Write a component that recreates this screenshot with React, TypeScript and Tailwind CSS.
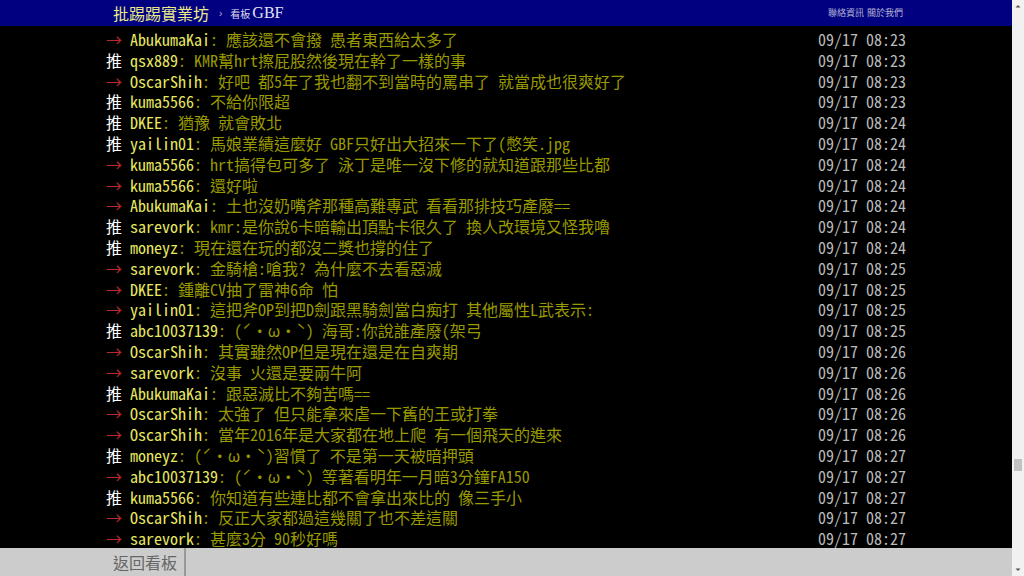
const pushes: [string, string, string, string][] = [
  ["→", "AbukumaKai", "應該還不會撥 愚者東西給太多了", "09/17 08:23"],
  ["推", "qsx889", "KMR幫hrt擦屁股然後現在幹了一樣的事", "09/17 08:23"],
  ["→", "OscarShih", "好吧 都5年了我也翻不到當時的罵串了 就當成也很爽好了", "09/17 08:23"],
  ["推", "kuma5566", "不給你限超", "09/17 08:23"],
  ["推", "DKEE", "猶豫 就會敗北", "09/17 08:24"],
  ["推", "yailin01", "馬娘業績這麼好 GBF只好出大招來一下了(憋笑.jpg", "09/17 08:24"],
  ["→", "kuma5566", "hrt搞得包可多了 泳丁是唯一沒下修的就知道跟那些比都", "09/17 08:24"],
  ["→", "kuma5566", "還好啦", "09/17 08:24"],
  ["→", "AbukumaKai", "土也沒奶嘴斧那種高難專武 看看那排技巧產廢==", "09/17 08:24"],
  ["推", "sarevork", "kmr:是你說6卡暗輸出頂點卡很久了 換人改環境又怪我嚕", "09/17 08:24"],
  ["推", "moneyz", "現在還在玩的都沒二獎也撐的住了", "09/17 08:24"],
  ["→", "sarevork", "金騎槍:嗆我? 為什麼不去看惡滅", "09/17 08:25"],
  ["→", "DKEE", "鍾離CV抽了雷神6命 怕", "09/17 08:25"],
  ["→", "yailin01", "這把斧OP到把D劍跟黑騎劍當白痴打 其他屬性L武表示:", "09/17 08:25"],
  ["推", "abc10037139", "(ˊ・ω・ˋ) 海哥:你說誰產廢(架弓", "09/17 08:25"],
  ["→", "OscarShih", "其實雖然OP但是現在還是在自爽期", "09/17 08:26"],
  ["→", "sarevork", "沒事 火還是要兩牛阿", "09/17 08:26"],
  ["推", "AbukumaKai", "跟惡滅比不夠苦嗎==", "09/17 08:26"],
  ["→", "OscarShih", "太強了 但只能拿來虐一下舊的王或打拳", "09/17 08:26"],
  ["→", "OscarShih", "當年2016年是大家都在地上爬 有一個飛天的進來", "09/17 08:26"],
  ["推", "moneyz", "(ˊ・ω・ˋ)習慣了 不是第一天被暗押頭", "09/17 08:27"],
  ["→", "abc10037139", "(ˊ・ω・ˋ) 等著看明年一月暗3分鐘FA150", "09/17 08:27"],
  ["推", "kuma5566", "你知道有些連比都不會拿出來比的 像三手小", "09/17 08:27"],
  ["→", "OscarShih", "反正大家都過這幾關了也不差這關", "09/17 08:27"],
  ["→", "sarevork", "甚麼3分 90秒好嗎", "09/17 08:27"],
];

const bbs = "font-['Noto_Sans_CJK_TC',sans-serif] [font-feature-settings:'hwid']";

const App = () => {
  return (
    <div className="flex h-[576px] w-full overflow-hidden bg-black">
      <div className="flex flex-1 flex-col">
        {/* Top bar */}
        <div className="h-[26px] shrink-0 bg-[#000080]">
          <div className="mx-auto flex h-full w-[800px] items-center justify-between pl-[7px] pr-[3px]">
            <div className="flex items-center">
              <span className="font-['Noto_Sans_CJK_TC',sans-serif] text-[16px] leading-none text-[#eaea88]">
                批踢踢實業坊
              </span>
              <span className="ml-[10px] font-['Liberation_Sans',sans-serif] text-[10px] text-[#b8b8d0]">›</span>
              <span className="ml-[8px] font-['Noto_Sans_CJK_TC',sans-serif] text-[10px] text-[#dcdcec]">看板</span>
              <span className="ml-[2px] font-['Liberation_Serif',serif] text-[16px] leading-none text-[#e4e4f4]">
                GBF
              </span>
            </div>
            <div className="flex gap-[3px] font-['Noto_Sans_CJK_TC',sans-serif] text-[9px] text-[#b4b4d4]">
              <span>聯絡資訊</span>
              <span>關於我們</span>
            </div>
          </div>
        </div>

        {/* Push list */}
        <div className="min-h-0 flex-1 overflow-hidden">
          <div className={`mx-auto w-[800px] pt-[3px] text-[16px] leading-[20.8px] ${bbs}`}>
            {pushes.map(([tag, user, content, time], i) => (
              <div key={i} className="flex justify-between whitespace-pre">
                <div>
                  <span className={tag === "推" ? "text-white" : "text-[#b82a2a]"}>{tag} </span>
                  <span className="text-[#e8e860]">{user}</span>
                  <span className="text-[#999900]">: {content}</span>
                </div>
                <span className="text-[#bbbbbb]">{time}</span>
              </div>
            ))}
          </div>
        </div>

        {/* Bottom bar */}
        <div className="h-[28px] shrink-0 bg-[#cccccc]">
          <div className="mx-auto flex h-full w-[800px]">
            <div className="flex h-full items-center border-r-2 border-[#999999] px-[7px] font-['Noto_Sans_CJK_TC',sans-serif] text-[16px] text-[#666666]">
              返回看板
            </div>
          </div>
        </div>
      </div>

      {/* Scrollbar */}
      <div className="flex w-[12px] shrink-0 flex-col items-center bg-[#f1f1f1]">
        <svg width="12" height="12" viewBox="0 0 12 12" className="shrink-0">
          <path d="M3.5 7.5 L6 5 L8.5 7.5 Z" fill="#505050" />
        </svg>
        <div className="h-[447px] shrink-0" />
        <div className="h-[12px] w-[8px] shrink-0 bg-[#c1c1c1]" />
        <div className="flex-1" />
        <svg width="12" height="12" viewBox="0 0 12 12" className="shrink-0">
          <path d="M3.5 4.5 L6 7 L8.5 4.5 Z" fill="#505050" />
        </svg>
      </div>
    </div>
  );
};

export default App;
